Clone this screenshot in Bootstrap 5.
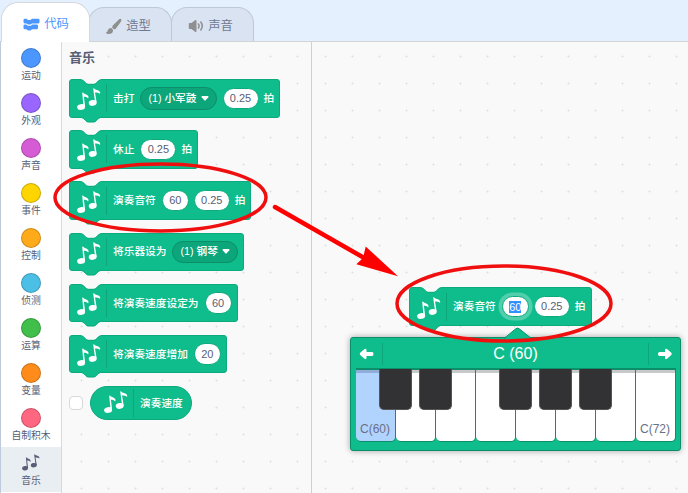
<!DOCTYPE html>
<html lang="zh-CN">
<head>
<meta charset="utf-8">
<meta name="viewport" content="width=device-width, initial-scale=1">
<title>Scratch 音乐</title>
<link href="https://cdn.jsdelivr.net/npm/bootstrap@5.3.0/dist/css/bootstrap.min.css" rel="stylesheet">
<style>
body{width:688px;height:493px;background:#e5f0ff;font-family:"Liberation Sans","Noto Sans CJK SC",sans-serif;color:#575e75;line-height:1}
.tabs{height:41px;padding-left:1px}
.tab-item{width:83px;height:34px;margin-left:-1px;border:1px solid #bdc8d8;border-bottom:0;border-radius:16px 16px 0 0;background:#d9e3f2;font-size:12.3px;color:#6f7990;gap:4px;padding-top:3px;padding-right:4px}
.tab-item.first{width:89px;height:40px;margin-left:0;background:#fff;color:#4c97ff;border-color:#d5d9df;z-index:2;position:relative;margin-bottom:-1px;padding-top:3px;border-radius:17px 17px 0 0;padding-left:2px;padding-right:1px}
.tab-item.second{width:84px;margin-left:-2px;padding-left:0;padding-right:4px}
.main{height:452px;border-top:1px solid #d0d3d8;border-left:1px solid #bfcbdc}
.cats{width:61px;background:#fff;border-right:1px solid #d9d9d9;padding-top:0}
.cat{height:45.05px;padding-top:6px;font-size:9.8px;color:#575e75;gap:3px;white-space:nowrap}
.cat.on{background:#e9eef2}
.dot{width:20px;height:20px;border-radius:50%;border:1px solid rgba(0,0,0,.2)}
.space{background:#f9f9f9 radial-gradient(circle at 50% 50%,#e0e0e0 .8px,transparent 1.2px) -0.5px .5px/27px 27px}
.palette{width:250px;border-right:1px solid #d0d0d0;padding:9px 0 0 7px;background-position:6px 1px}
.work{background-position:0 1px}
.ttl{font-size:13px;font-weight:700;line-height:14px;height:28px}
.blk{position:relative;height:38.5px;width:max-content;background:#0fbd8c;border:1px solid #0daa7e;border-radius:3px;padding:0 5px 0 7px;font-size:10.7px;font-weight:500;color:#fff;margin-bottom:12.7px;white-space:nowrap}
.blk>*{position:relative}
.blk .notch{position:absolute;left:9px;top:-1px;width:24px;height:6px;display:block}
.blk .bump{position:absolute;left:9px;bottom:-6px;width:24px;height:7px;display:block}
.ico{width:24px;height:24px;margin-top:4px;flex:none}
.sep{width:1px;height:28px;background:#0da57a;margin:0 6px 0 5px;flex:none}
.val{height:21.5px;border-radius:11px;background:#fff;border:1px solid #0daa7e;color:#575e75;font-size:11px;margin:0 5px 0 6px;font-weight:400;flex:none}
.v2{width:27px}.v4{width:36px}
.val+.val{margin-left:0}
.val:last-child{margin-right:0}
.drop{height:22.5px;border-radius:12px;background:#0da57a;border:1px solid #0b8e69;margin:0 0 0 6px;padding:0 7px;gap:4px}
.rep{width:101.5px;height:33.5px;border-radius:17px;padding-left:13px;margin:0}
.rep .ico{margin-top:1px}
.chk{width:14px;height:14px;border:1px solid #d9d9d9;border-radius:4px;background:#fff;margin-right:7px}
.placed{margin:245.3px 0 0 97px;width:183px}
.focus{box-shadow:0 0 0 3.5px rgba(255,255,255,.28)}
.sel{background:#3390ff;color:#fff;line-height:12px}
.piano{position:relative;width:331px;height:114px;margin:11px 0 0 38px;background:#0fbd8c;border:1px solid #0b8e69;border-radius:3px;box-shadow:0 0 6px rgba(0,0,0,.35);padding:0 4.500px}
.piano .tip{position:absolute;left:153px;top:-11px;width:28px;height:12px}
.phead{height:30px;font-size:16px;color:#fff;padding-top:2px}
.phead .arr{width:27px;height:22px}
.keys{position:relative;height:73px;border-top:2px solid #0b8e69}
.wkey{width:40px;height:72px;background:linear-gradient(#c8c8c8 0 3px,#fff 3px);border:1px solid #0b8e69;border-top:0;border-left-width:0;border-radius:0 0 5px 5px;font-size:12px;color:#6a7086;padding-bottom:6px;white-space:nowrap}
.wkey.on{background:linear-gradient(#8fadd8 0 3px,#b1d4ff 3px)}
.bkey{position:absolute;top:-1px;width:33px;height:41px;background:#323234;border:1px solid #555;border-top:0;border-radius:0 0 5px 5px}
.k1{left:23.500px}.k2{left:63.500px}.k3{left:143.500px}.k4{left:183.500px}.k5{left:223.500px}
.marks{left:0;top:0;z-index:9;pointer-events:none}
</style>
<script src="https://cdn.jsdelivr.net/npm/bootstrap@5.3.0/dist/js/bootstrap.bundle.min.js"></script>
</head>
<body class="m-0 overflow-hidden position-relative">
<svg class="d-none">
  <symbol id="music" viewBox="0 0 24 24"><g fill="currentColor"><ellipse cx="4.100" cy="19" rx="4" ry="2.900" transform="rotate(-10 4.100 19)"/><path d="M5.200 4.800Q5.400 4.300 6.200 4.800C7.500 6.300 10 6.300 11.200 8Q11.900 9.400 11.100 10.500C10 9 8.300 8.900 6.900 8.800L8.100 18.500L6.500 18.500Z"/><ellipse cx="15.700" cy="14.900" rx="4" ry="2.900" transform="rotate(-10 15.700 14.900)"/><path d="M16.200 .6Q16.400 .1 17.200 .6C18.500 2.200 21.200 1.800 22.700 3.500Q23.600 4.700 23 5.900C21.800 4.600 19.600 4.800 18 4.600L19.700 14.500L18.100 14.500Z"/></g></symbol>
  <symbol id="notch" viewBox="0 0 24 6"><path d="M0 0H24C21.500 0 20 1 18.500 2.500C16.800 4.300 16 5 14.500 5H9.500C8 5 7.200 4.300 5.500 2.500C4 1 2.500 0 0 0Z" fill="#f9f9f9"/><path d="M0 .5C2.500 .5 4 1.300 5.500 2.800C7.200 4.500 8 5.300 9.500 5.300H14.500C16 5.300 16.800 4.500 18.500 2.800C20 1.300 21.500 .5 24 .5" fill="none" stroke="#0daa7e"/></symbol>
  <symbol id="bump" viewBox="0 0 24 7"><path d="M0 0H24V1.500C21.500 1.500 20 2.200 18.500 3.700C16.800 5.400 16 6.300 14.500 6.300H9.500C8 6.300 7.200 5.400 5.500 3.700C4 2.200 2.500 1.500 0 1.500Z" fill="#0fbd8c"/><path d="M0 1.500C2.500 1.500 4 2.200 5.500 3.700C7.200 5.400 8 6.300 9.500 6.300H14.500C16 6.300 16.800 5.400 18.500 3.700C20 2.200 21.500 1.500 24 1.500" transform="translate(0 -.4)" fill="none" stroke="#0daa7e"/></symbol>
  <symbol id="caret" viewBox="0 0 8 5"><path d="M1.200 0H6.800Q8 .3 7.300 1.300L4.700 4.300Q4 5 3.300 4.300L.7 1.300Q0 .3 1.200 0Z" fill="#fff"/></symbol>
  <symbol id="right" viewBox="0 0 16 14"><path d="M2.500 5H8V3Q8.200 1 10 2.100L14.300 5.800Q15.300 6.900 14.300 8L10 11.800Q8.200 12.800 8 11V9H2.500Q1 8.800 1 7T2.500 5Z" fill="#fff"/></symbol>
</svg>

<nav class="tabs d-flex align-items-end">
  <div class="tab-item first d-flex align-items-center justify-content-center">
    <svg width="17" height="13" viewBox="0 0 17 13" fill="#4c97ff"><path d="M.5 1.500L1.500 .8H3.500L5 2H7.500L9 .8H15.500L16.500 1.500V4.500L15.500 5.500H9L7.500 6.500H5L3.500 5.500H1.500L.5 4.500ZM.5 7.300L1.500 6.500H3.200L4.800 7.800H7.800L9.300 6.500H14L15 7.300V10.500L14 11.300H9L7.500 12.500H5L3.500 11.300H1.500L.5 10.500Z"/></svg>
    <span>代码</span></div>
  <div class="tab-item second d-flex align-items-center justify-content-center">
    <svg width="17" height="17" viewBox="0 0 17 17" fill="#8f8f8f"><path d="M16 .9Q17 2 15.700 4L10.500 11Q9 12 7.600 10.300Q6.500 9 7.800 7.600L14.100 1.300Q15.200 .3 16 .9ZM6.300 10Q8.300 11 8 13Q7.500 16 3.800 16Q1.500 16 .8 14.500Q2.600 14.300 2.700 12.500Q3.300 9.700 6.300 10Z"/></svg>
    <span>造型</span></div>
  <div class="tab-item d-flex align-items-center justify-content-center">
    <svg width="16" height="14" viewBox="0 0 16 14" fill="#8f8f8f"><path d="M.8 4.500Q.8 4 1.500 4H3.500L7 1.300Q8.500 .5 8.500 2V12Q8.500 13.500 7 12.700L3.500 10H1.500Q.8 10 .8 9.300Z"/><path d="M10.400 5Q11.700 7 10.400 9M12.800 3Q15.700 7 12.800 11" fill="none" stroke="#8f8f8f" stroke-width="1.500" stroke-linecap="round"/></svg>
    <span>声音</span></div>
</nav>

<main class="main d-flex">
  <aside class="cats flex-shrink-0">
    <div class="cat d-flex flex-column align-items-center"><i class="dot" style="background:#4c97ff"></i>运动</div>
    <div class="cat d-flex flex-column align-items-center"><i class="dot" style="background:#9966ff"></i>外观</div>
    <div class="cat d-flex flex-column align-items-center"><i class="dot" style="background:#d65cd6"></i>声音</div>
    <div class="cat d-flex flex-column align-items-center"><i class="dot" style="background:#ffd500"></i>事件</div>
    <div class="cat d-flex flex-column align-items-center"><i class="dot" style="background:#ffab19"></i>控制</div>
    <div class="cat d-flex flex-column align-items-center"><i class="dot" style="background:#4cbfe6"></i>侦测</div>
    <div class="cat d-flex flex-column align-items-center"><i class="dot" style="background:#40bf4a"></i>运算</div>
    <div class="cat d-flex flex-column align-items-center"><i class="dot" style="background:#ff8c1a"></i>变量</div>
    <div class="cat d-flex flex-column align-items-center"><i class="dot" style="background:#ff6680"></i>自制积木</div>
    <div class="cat on d-flex flex-column align-items-center"><svg width="18" height="20"><use href="#music"/></svg>音乐</div>
  </aside>

  <section class="palette space flex-shrink-0">
    <div class="ttl">音乐</div>
    <div class="blk d-flex align-items-center"><svg class="notch"><use href="#notch"/></svg><svg class="bump"><use href="#bump"/></svg><svg class="ico"><use href="#music"/></svg><i class="sep"></i><span>击打</span><span class="drop d-flex align-items-center">(1) 小军鼓<svg width="8" height="5"><use href="#caret"/></svg></span><span class="val v4 d-flex align-items-center justify-content-center">0.25</span><span>拍</span></div>
    <div class="blk d-flex align-items-center"><svg class="notch"><use href="#notch"/></svg><svg class="bump"><use href="#bump"/></svg><svg class="ico"><use href="#music"/></svg><i class="sep"></i><span>休止</span><span class="val v4 d-flex align-items-center justify-content-center">0.25</span><span>拍</span></div>
    <div class="blk d-flex align-items-center"><svg class="notch"><use href="#notch"/></svg><svg class="bump"><use href="#bump"/></svg><svg class="ico"><use href="#music"/></svg><i class="sep"></i><span>演奏音符</span><span class="val v2 d-flex align-items-center justify-content-center">60</span><span class="val v4 d-flex align-items-center justify-content-center">0.25</span><span>拍</span></div>
    <div class="blk d-flex align-items-center"><svg class="notch"><use href="#notch"/></svg><svg class="bump"><use href="#bump"/></svg><svg class="ico"><use href="#music"/></svg><i class="sep"></i><span>将乐器设为</span><span class="drop d-flex align-items-center">(1) 钢琴<svg width="8" height="5"><use href="#caret"/></svg></span></div>
    <div class="blk d-flex align-items-center"><svg class="notch"><use href="#notch"/></svg><svg class="bump"><use href="#bump"/></svg><svg class="ico"><use href="#music"/></svg><i class="sep"></i><span>将演奏速度设定为</span><span class="val v2 d-flex align-items-center justify-content-center">60</span></div>
    <div class="blk d-flex align-items-center"><svg class="notch"><use href="#notch"/></svg><svg class="bump"><use href="#bump"/></svg><svg class="ico"><use href="#music"/></svg><i class="sep"></i><span>将演奏速度增加</span><span class="val v2 d-flex align-items-center justify-content-center">20</span></div>
    <div class="d-flex align-items-center"><span class="chk"></span><div class="blk rep d-flex align-items-center"><svg class="ico"><use href="#music"/></svg><i class="sep"></i><span>演奏速度</span></div></div>
  </section>

  <section class="work space flex-grow-1 overflow-hidden">
    <div class="blk placed d-flex align-items-center"><svg class="notch"><use href="#notch"/></svg><svg class="bump"><use href="#bump"/></svg><svg class="ico"><use href="#music"/></svg><i class="sep"></i><span>演奏音符</span><span class="val v2 focus d-flex align-items-center justify-content-center"><span class="sel">60</span></span><span class="val v4 d-flex align-items-center justify-content-center">0.25</span><span>拍</span></div>
    <div class="piano">
      <svg class="tip" viewBox="0 0 28 12"><path d="M0 12L11.500 2Q13.500 .2 15.500 2L28 12Z" fill="#0fbd8c"/><path d="M0 11.500L11.500 2Q13.500 .2 15.500 2L27.500 11.500" fill="none" stroke="#0b8e69"/></svg>
      <div class="phead d-flex align-items-center justify-content-between">
        <span class="arr d-flex align-items-center"><svg width="18" height="14" viewBox="0 0 18 14"><use href="#right" width="16" height="14" transform="matrix(-1 0 0 1 18.500 0)"/></svg><i class="sep h-100 ms-auto me-0"></i></span>
        <span>C (60)</span>
        <span class="arr d-flex align-items-center"><i class="sep h-100 ms-0 me-auto"></i><svg width="18" height="14" viewBox="0 0 18 14"><use href="#right" width="16" height="14"/></svg></span>
      </div>
      <div class="keys d-flex">
        <div class="wkey on d-flex align-items-end justify-content-center">C(60)</div><div class="wkey"></div><div class="wkey"></div><div class="wkey"></div><div class="wkey"></div><div class="wkey"></div><div class="wkey"></div><div class="wkey d-flex align-items-end justify-content-center">C(72)</div>
        <i class="bkey k1"></i><i class="bkey k2"></i><i class="bkey k3"></i><i class="bkey k4"></i><i class="bkey k5"></i>
      </div>
    </div>
  </section>
</main>
<svg class="marks position-absolute" width="688" height="493" fill="none" stroke="#f00f0f" stroke-width="3.500">
  <ellipse cx="160.500" cy="197.500" rx="105.500" ry="33.500"/>
  <ellipse cx="504" cy="303.500" rx="107" ry="37.500"/>
  <path d="M275 207L366 259" stroke="#f00" stroke-width="4.500" stroke-linecap="round"/>
  <path d="M365.700 246.500L398 276.200L356.300 264.200L363 258Z" fill="#f00" stroke="none"/>
</svg>
</body>
</html>
